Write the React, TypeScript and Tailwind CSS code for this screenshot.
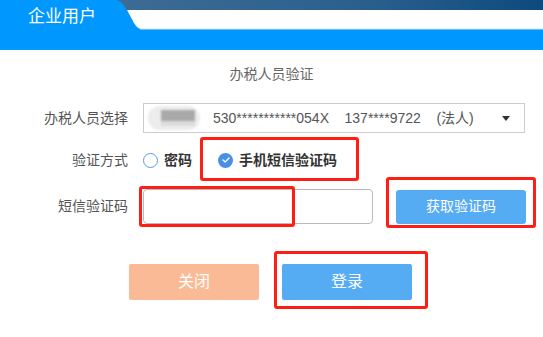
import React from 'react'

const font = { fontFamily: '"Liberation Sans", "Noto Sans CJK SC", sans-serif' }

function HeaderArt() {
  return (
    <svg className="absolute inset-0" width="543" height="50" viewBox="0 0 543 50">
      <defs>
        <linearGradient id="band" x1="0" x2="1" y1="0" y2="0">
          <stop offset="0" stopColor="#3d6c94" />
          <stop offset="0.6" stopColor="#2a5f8d" />
          <stop offset="1" stopColor="#0d4a7e" />
        </linearGradient>
      </defs>
      <rect x="0" y="0" width="543" height="50" fill="#0098ff" />
      <path d="M115,0 L543,0 L543,11 L127,11 C124,5 121,0 115,0 Z" fill="url(#band)" />
      <path d="M127,10 L543,10 L543,29 L142,29 C138,29 136,26 134,23 Z" fill="#ffffff" />
      <rect x="140" y="28.5" width="403" height="1" fill="#cfe6fb" />
    </svg>
  )
}

export default function App() {
  return (
    <div className="relative w-[543px] h-[337px] bg-white overflow-hidden" style={font}>
      {/* header */}
      <div className="relative h-[50px]">
        <HeaderArt />
        <span className="relative block pl-[28px] pt-[5px] text-[17px] text-white leading-[24px]">企业用户</span>
      </div>

      <div className="pt-[15px] text-center text-[14px] text-[#666] leading-[18px]">办税人员验证</div>

      <div className="mt-[20px] flex flex-col">
        {/* row 1 */}
        <div className="flex items-center h-[30px]">
          <div className="w-[128px] text-right text-[14px] text-[#555]">办税人员选择</div>
          <div className="ml-[15px] w-[382px] h-[30px] border border-[#ccc] flex items-center">
            <div className="relative ml-[4px] w-[52px] h-[24px] rounded-full bg-[#ececec] blur-[1px]">
              <div className="absolute left-[13px] top-[4px] w-[34px] h-[11px] bg-[#a9a9a9]" />
              <div className="absolute left-[13px] top-[15px] w-[34px] h-[5px] bg-[#dcdcdc]" />
            </div>
            <span className="ml-[13px] text-[14px] text-[#555] whitespace-pre">530***********054X    137****9722    (法人)</span>
            <span className="ml-auto mr-[14px] w-0 h-0 border-l-[4px] border-r-[4px] border-t-[5px] border-l-transparent border-r-transparent border-t-[#333]" />
          </div>
        </div>

        {/* row 2 */}
        <div className="mt-[12px] flex items-center h-[30px]">
          <div className="w-[128px] text-right text-[14px] text-[#555]">验证方式</div>
          <div className="ml-[15px] flex items-center">
            <span className="w-[15px] h-[15px] rounded-full border border-[#5a9be6] bg-white" />
            <span className="ml-[6px] text-[14px] font-bold text-[#333]">密码</span>
          </div>
          <div className="ml-[26px] flex items-center">
            <span className="w-[15px] h-[15px] rounded-full bg-[#4a8fe7] flex items-center justify-center">
              <svg width="8" height="6" viewBox="0 0 8 6">
                <path d="M1,3 L3.2,5 L7,1" stroke="white" strokeWidth="1.4" fill="none" strokeLinecap="round" strokeLinejoin="round" />
              </svg>
            </span>
            <span className="ml-[6px] text-[14px] font-bold text-[#333]">手机短信验证码</span>
          </div>
        </div>

        {/* row 3 */}
        <div className="mt-[14px] flex items-center h-[35px]">
          <div className="w-[128px] text-right text-[14px] text-[#555]">短信验证码</div>
          <input className="ml-[15px] w-[230px] h-[35px] border border-[#bbb] rounded-[4px] outline-none" />
          <button className="ml-[23px] w-[130px] h-[34px] rounded-[3px] bg-[#55acf2] text-white text-[14px]">获取验证码</button>
        </div>

        {/* buttons */}
        <div className="mt-[40px] flex items-center">
          <button className="ml-[129px] w-[130px] h-[36px] rounded-[2px] bg-[#fbba96] text-white text-[16px]">关闭</button>
          <button className="ml-[23px] w-[130px] h-[36px] rounded-[2px] bg-[#56acf2] text-white text-[16px]">登录</button>
        </div>
      </div>

      {/* red annotation boxes */}
      <div className="absolute left-[200px] top-[137px] w-[159px] h-[44px] border-[3px] border-[#ff1e14] rounded-[3px]" />
      <div className="absolute left-[139px] top-[186px] w-[156px] h-[41px] border-[3px] border-[#ff1e14] rounded-[3px]" />
      <div className="absolute left-[386px] top-[177px] w-[150px] h-[51px] border-[3px] border-[#ff1e14] rounded-[3px]" />
      <div className="absolute left-[274px] top-[251px] w-[154px] h-[58px] border-[3px] border-[#ff1e14] rounded-[3px]" />
    </div>
  )
}
